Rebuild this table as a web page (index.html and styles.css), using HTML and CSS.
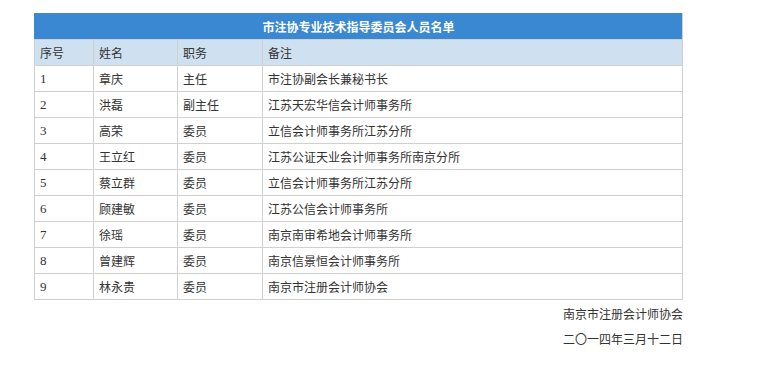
FILE: index.html
```html
<!DOCTYPE html>
<html lang="zh-CN">
<head>
<meta charset="utf-8">
<title>市注协专业技术指导委员会人员名单</title>
<link rel="stylesheet" href="styles.css">
</head>
<body>
<div class="page">
  <table class="roster">
    <colgroup>
      <col class="c-no">
      <col class="c-name">
      <col class="c-role">
      <col class="c-note">
    </colgroup>
    <thead>
      <tr class="title-row"><th colspan="4">市注协专业技术指导委员会人员名单</th></tr>
      <tr class="head-row"><td>序号</td><td>姓名</td><td>职务</td><td>备注</td></tr>
    </thead>
    <tbody>
      <tr><td class="num">1</td><td>章庆</td><td>主任</td><td>市注协副会长兼秘书长</td></tr>
      <tr><td class="num">2</td><td>洪磊</td><td>副主任</td><td>江苏天宏华信会计师事务所</td></tr>
      <tr><td class="num">3</td><td>高荣</td><td>委员</td><td>立信会计师事务所江苏分所</td></tr>
      <tr><td class="num">4</td><td>王立红</td><td>委员</td><td>江苏公证天业会计师事务所南京分所</td></tr>
      <tr><td class="num">5</td><td>蔡立群</td><td>委员</td><td>立信会计师事务所江苏分所</td></tr>
      <tr><td class="num">6</td><td>顾建敏</td><td>委员</td><td>江苏公信会计师事务所</td></tr>
      <tr><td class="num">7</td><td>徐瑶</td><td>委员</td><td>南京南审希地会计师事务所</td></tr>
      <tr><td class="num">8</td><td>曾建辉</td><td>委员</td><td>南京信景恒会计师事务所</td></tr>
      <tr><td class="num">9</td><td>林永贵</td><td>委员</td><td>南京市注册会计师协会</td></tr>
    </tbody>
  </table>
  <div class="sign">
    <p>南京市注册会计师协会</p>
    <p>二〇一四年三月十二日</p>
  </div>
</div>
</body>
</html>
```

FILE: styles.css
```css
html, body {
  margin: 0;
  padding: 0;
  background: #ffffff;
}
body {
  font-family: "Noto Sans CJK SC", "Noto Sans", sans-serif;
  font-size: 12px;
  color: #333333;
}
.page {
  width: 649px;
  margin-left: 34px;
  padding-top: 13px;
}
.roster {
  width: 649px;
  border-collapse: collapse;
  table-layout: fixed;
}
.c-no { width: 59px; }
.c-name { width: 84px; }
.c-role { width: 85px; }
.c-note { width: auto; }
.roster td, .roster th {
  border: 1px solid #d0d0d0;
  height: 25px;
  line-height: 25px;
  padding: 0 0 0 5px;
  text-align: left;
  white-space: nowrap;
  overflow: hidden;
}
.title-row th {
  background: #3a88d2;
  color: #ffffff;
  font-weight: bold;
  text-align: center;
  padding: 0;
  border-color: #3a88d2 #d0d0d0 #d0d0d0 #3a88d2;
}
.head-row td {
  background: #cfe1f0;
}
.num {
  font-family: "Liberation Serif", serif;
  font-size: 13px;
}
.sign {
  text-align: right;
  padding-top: 1px;
}
.sign p {
  margin: 0;
  line-height: 25px;
}
```
